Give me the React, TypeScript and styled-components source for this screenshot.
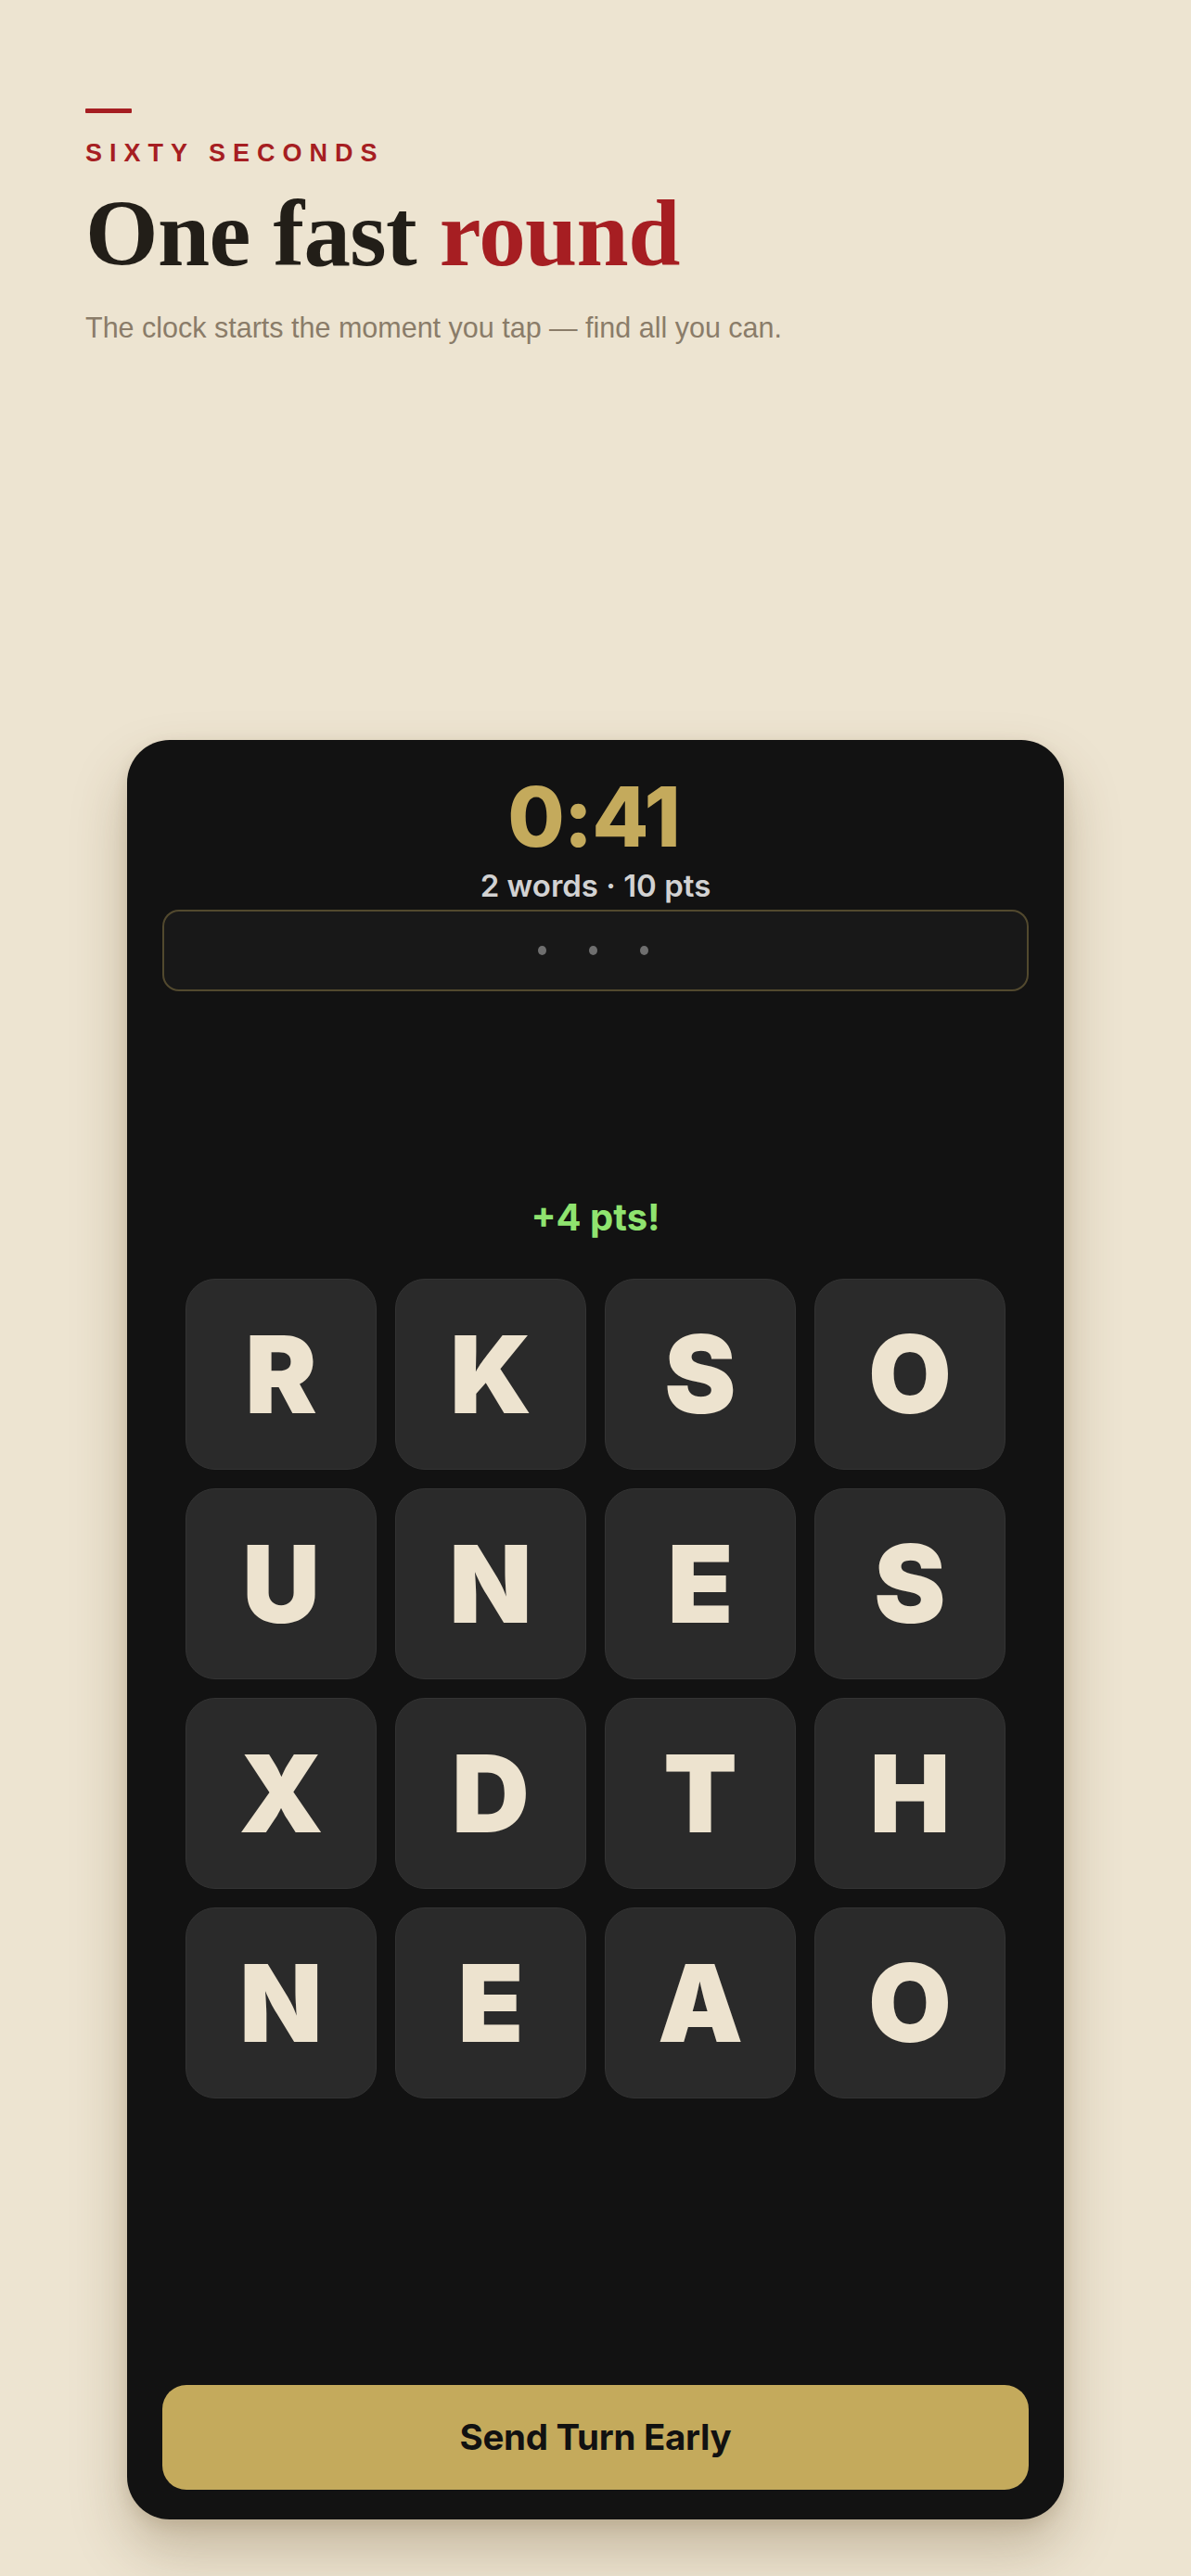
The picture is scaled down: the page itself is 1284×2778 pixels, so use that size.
import React from 'react';
import styled, { createGlobalStyle } from 'styled-components';

const GlobalStyle = createGlobalStyle`
  html, body {
    margin: 0;
    padding: 0;
    background: #ede4d1;
  }
  #root {
    min-height: 2778px;
  }
`;

const Page = styled.div`
  padding: 117px 92px 0;
  font-family: 'Liberation Sans', Arial, sans-serif;
`;

const Header = styled.header`
  display: flex;
  flex-direction: column;
  align-items: flex-start;
`;

const Rule = styled.div`
  width: 50px;
  height: 5px;
  border-radius: 1px;
  background: #a61e22;
`;

const Eyebrow = styled.div`
  margin-top: 30px;
  font-size: 27px;
  line-height: 1;
  font-weight: 700;
  letter-spacing: 8px;
  color: #a61e22;
`;

const Title = styled.h1`
  margin: 23px 0 0;
  font-family: 'Liberation Serif', 'Times New Roman', serif;
  font-size: 101px;
  line-height: 1;
  font-weight: 700;
  letter-spacing: -0.6px;
  color: #221e18;
`;

const Accent = styled.span`
  color: #a61e22;
`;

const Subtitle = styled.p`
  margin: 35px 0 0;
  font-size: 30.5px;
  line-height: 1;
  color: #8a7c69;
`;

const CardSlot = styled.div`
  margin: 0 -92px;
`;

const Card = styled.section`
  box-sizing: border-box;
  width: 1010px;
  height: 1919px;
  margin: 429px auto 0;
  padding: 38px 38px 32px;
  border-radius: 46px;
  background: #121212;
  box-shadow: 0 32px 60px rgba(90, 65, 25, 0.28), 0 6px 16px rgba(90, 65, 25, 0.12);
  display: flex;
  flex-direction: column;
  align-items: center;
  font-family: Inter, 'Noto Sans', sans-serif;
`;

const Timer = styled.div`
  font-size: 89px;
  line-height: 1;
  font-weight: 800;
  color: #c4aa5c;
  letter-spacing: -1px;
  margin-right: 4px;
`;

const Stats = styled.div`
  margin-top: 14px;
  font-size: 33px;
  line-height: 1;
  font-weight: 600;
  color: #d2d2d2;
`;

const WordField = styled.div`
  box-sizing: border-box;
  margin-top: 9px;
  width: 100%;
  height: 88px;
  border: 2px solid rgba(196, 170, 92, 0.34);
  border-radius: 18px;
  background: #181818;
  display: flex;
  align-items: center;
  justify-content: center;
  gap: 46px;
  padding-right: 6px;
`;

const Dot = styled.span`
  width: 9px;
  height: 10px;
  border-radius: 50%;
  background: #6f6f6f;
`;

const Flash = styled.div`
  margin-top: 224px;
  font-size: 40px;
  line-height: 1;
  font-weight: 700;
  color: #8fe36f;
`;

const Grid = styled.div`
  margin-top: 46px;
  display: grid;
  grid-template-columns: repeat(4, 206px);
  grid-auto-rows: 206px;
  gap: 20px;
`;

const Tile = styled.div`
  box-sizing: border-box;
  border-radius: 32px;
  background: #2a2a2a;
  border: 1.5px solid #333333;
  display: flex;
  align-items: center;
  justify-content: center;
  font-size: 116px;
  font-weight: 900;
  line-height: 1;
  color: #ede3cf;
`;

const SendButton = styled.button`
  margin-top: auto;
  width: 100%;
  height: 113px;
  border: none;
  border-radius: 26px;
  background: #c4aa5c;
  color: #111;
  font-family: Inter, 'Noto Sans', sans-serif;
  font-size: 38.5px;
  font-weight: 700;
  letter-spacing: -0.3px;
  cursor: pointer;
`;

const letters = 'RKSOUNESXDTHNEAO'.split('');

export default function App() {
  return (
    <>
      <GlobalStyle />
      <Page>
        <Header>
          <Rule />
          <Eyebrow>SIXTY SECONDS</Eyebrow>
          <Title>
            One fast <Accent>round</Accent>
          </Title>
          <Subtitle>The clock starts the moment you tap — find all you can.</Subtitle>
        </Header>
        <CardSlot>
          <Card>
            <Timer>0:41</Timer>
            <Stats>2 words · 10 pts</Stats>
            <WordField>
              <Dot />
              <Dot />
              <Dot />
            </WordField>
            <Flash>+4 pts!</Flash>
            <Grid>
              {letters.map((l, i) => (
                <Tile key={i}>{l}</Tile>
              ))}
            </Grid>
            <SendButton>Send Turn Early</SendButton>
          </Card>
        </CardSlot>
      </Page>
    </>
  );
}
